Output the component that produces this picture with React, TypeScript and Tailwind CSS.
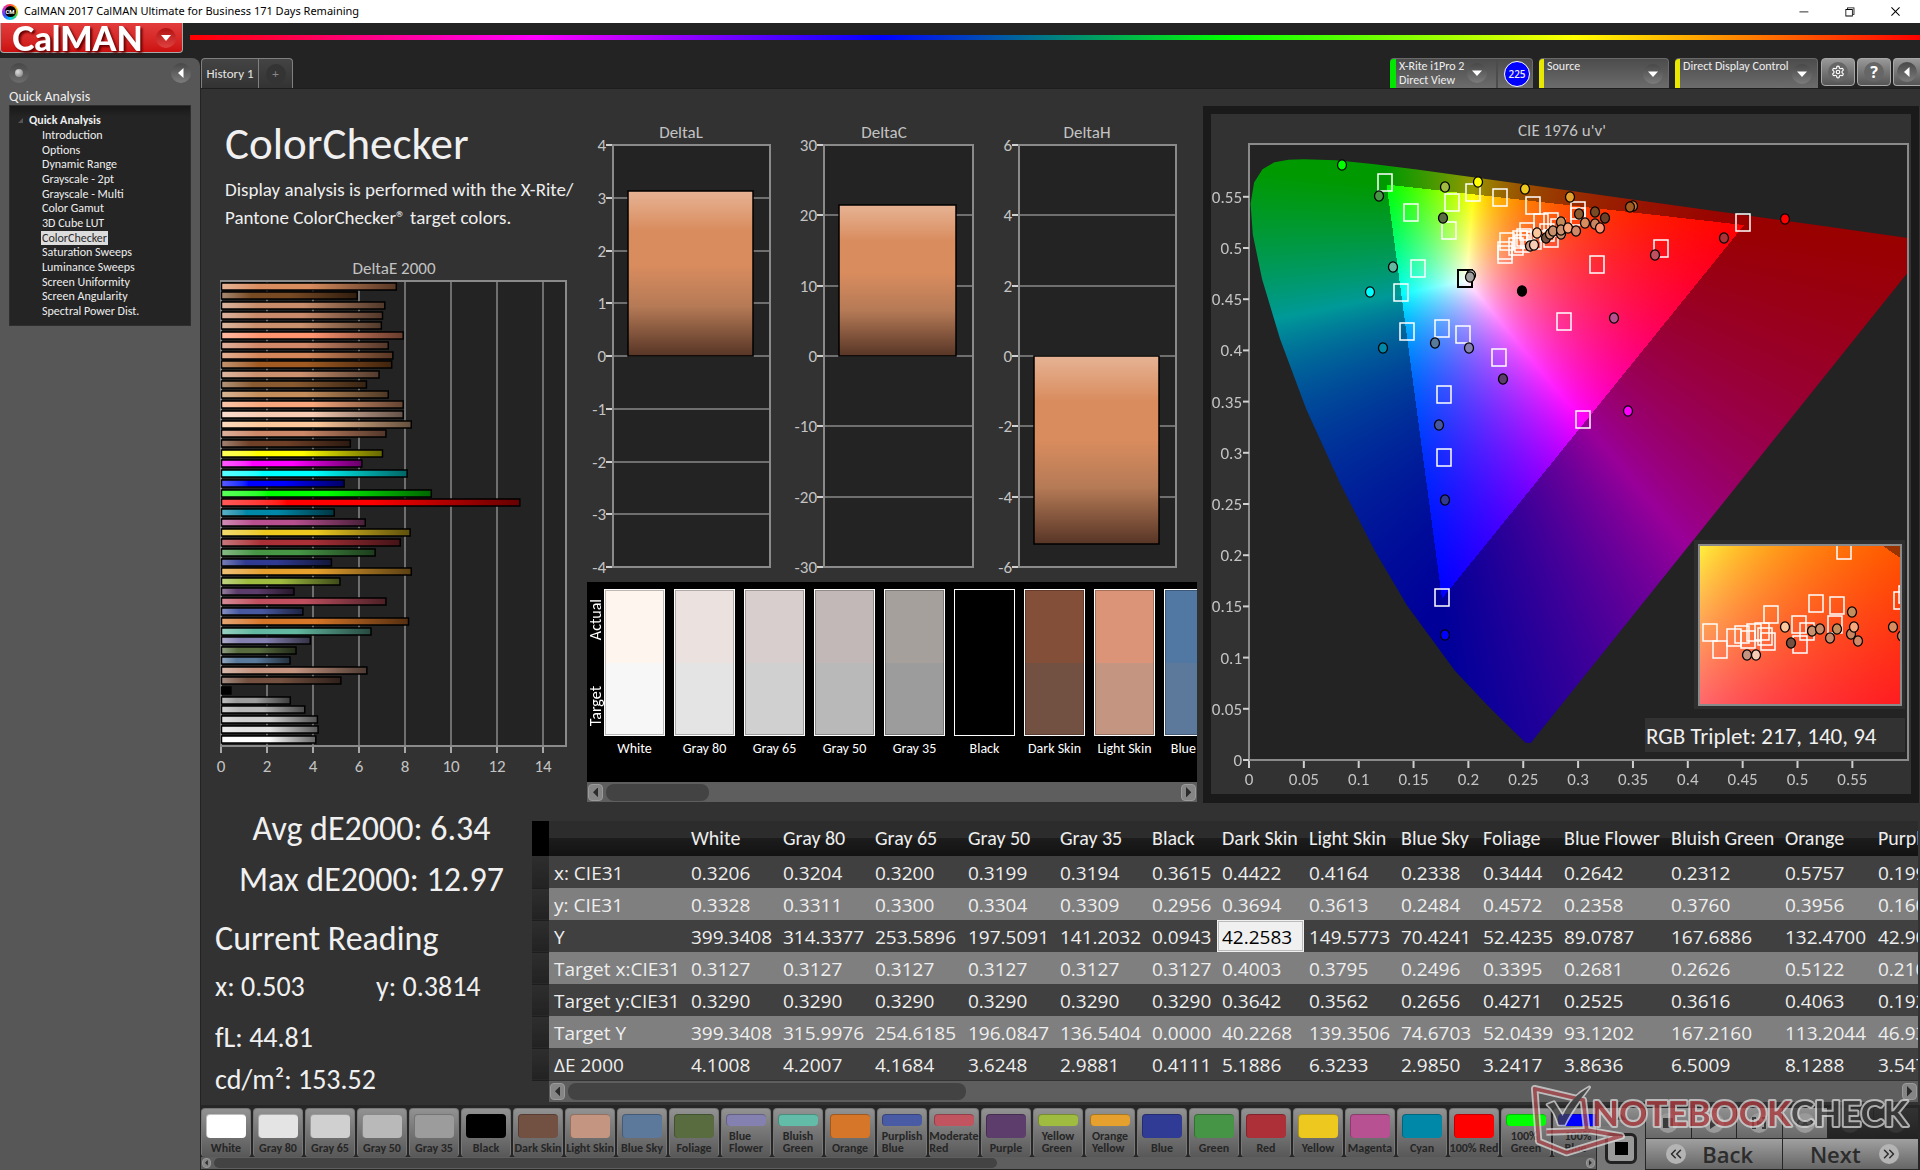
import React, { useEffect, useRef } from "react";
import clsx from "clsx";
import { VscChromeClose, VscChromeMinimize, VscChromeRestore } from "react-icons/vsc";
import { FiChevronsLeft, FiChevronsRight } from "react-icons/fi";
import { LuSettings } from "react-icons/lu";

const pages = [
  "Introduction",
  "Options",
  "Dynamic Range",
  "Grayscale - 2pt",
  "Grayscale - Multi",
  "Color Gamut",
  "3D Cube LUT",
  "ColorChecker",
  "Saturation Sweeps",
  "Luminance Sweeps",
  "Screen Uniformity",
  "Screen Angularity",
  "Spectral Power Dist.",
];

// [dE2000, color] from the top of the chart to the bottom
const deltaE: [number, string][] = [
  [7.6, "#d98c5e"],
  [5.9, "#784a24"],
  [7.1, "#c88c6a"],
  [7.0, "#c88a6a"],
  [6.95, "#c8906c"],
  [7.9, "#ff9470"],
  [7.25, "#d08868"],
  [7.45, "#d4865a"],
  [7.4, "#a05a22"],
  [6.85, "#cc9270"],
  [6.3, "#8a5a30"],
  [7.25, "#c48e5c"],
  [7.9, "#f8a87c"],
  [7.9, "#f8ccb4"],
  [8.25, "#fcc79a"],
  [7.15, "#cc8868"],
  [5.6, "#6e4028"],
  [7.0, "#ffff00"],
  [6.1, "#ff00ff"],
  [8.07, "#00ffff"],
  [5.33, "#0000ff"],
  [9.12, "#00ff00"],
  [12.97, "#ff0000"],
  [4.9, "#0088a8"],
  [6.25, "#b85090"],
  [8.2, "#edc920"],
  [7.77, "#aa3038"],
  [6.68, "#469646"],
  [4.78, "#303a90"],
  [8.25, "#e5a02e"],
  [5.15, "#9fbc40"],
  [3.15, "#5c3c6a"],
  [7.15, "#c05060"],
  [3.54, "#4858a0"],
  [8.13, "#d67628"],
  [6.5, "#62b8a0"],
  [3.86, "#8480b0"],
  [3.24, "#586c3f"],
  [2.98, "#5a7a9c"],
  [6.32, "#c49480"],
  [5.19, "#735040"],
  [0.41, "#000000"],
  [2.99, "#9c9c9c"],
  [3.62, "#b8b8b8"],
  [4.17, "#d0d0d0"],
  [4.2, "#e4e4e4"],
  [4.1, "#ffffff"],
];

const swatches = [
  { name: "White", actual: "#fff5ef", target: "#f7f7f7" },
  { name: "Gray 80", actual: "#ebe2e0", target: "#e4e4e4" },
  { name: "Gray 65", actual: "#d8cecd", target: "#d0d0d0" },
  { name: "Gray 50", actual: "#c2b8b7", target: "#b9b9b9" },
  { name: "Gray 35", actual: "#a5a09c", target: "#9c9c9c" },
  { name: "Black", actual: "#000000", target: "#000000" },
  { name: "Dark Skin", actual: "#834f39", target: "#735142" },
  { name: "Light Skin", actual: "#dc9479", target: "#c49681" },
  { name: "Blue Sky", actual: "#5177a3", target: "#5c799c" },
];

const headers = [
  "White",
  "Gray 80",
  "Gray 65",
  "Gray 50",
  "Gray 35",
  "Black",
  "Dark Skin",
  "Light Skin",
  "Blue Sky",
  "Foliage",
  "Blue Flower",
  "Bluish Green",
  "Orange",
  "Purplish Blue",
];

const rows: [string, string[]][] = [
  ["x: CIE31", ["0.3206", "0.3204", "0.3200", "0.3199", "0.3194", "0.3615", "0.4422", "0.4164", "0.2338", "0.3444", "0.2642", "0.2312", "0.5757", "0.199"]],
  ["y: CIE31", ["0.3328", "0.3311", "0.3300", "0.3304", "0.3309", "0.2956", "0.3694", "0.3613", "0.2484", "0.4572", "0.2358", "0.3760", "0.3956", "0.160"]],
  ["Y", ["399.3408", "314.3377", "253.5896", "197.5091", "141.2032", "0.0943", "42.2583", "149.5773", "70.4241", "52.4235", "89.0787", "167.6886", "132.4700", "42.90"]],
  ["Target x:CIE31", ["0.3127", "0.3127", "0.3127", "0.3127", "0.3127", "0.3127", "0.4003", "0.3795", "0.2496", "0.3395", "0.2681", "0.2626", "0.5122", "0.210"]],
  ["Target y:CIE31", ["0.3290", "0.3290", "0.3290", "0.3290", "0.3290", "0.3290", "0.3642", "0.3562", "0.2656", "0.4271", "0.2525", "0.3616", "0.4063", "0.192"]],
  ["Target Y", ["399.3408", "315.9976", "254.6185", "196.0847", "136.5404", "0.0000", "40.2268", "139.3506", "74.6703", "52.0439", "93.1202", "167.2160", "113.2044", "46.93"]],
  ["ΔE 2000", ["4.1008", "4.2007", "4.1684", "3.6248", "2.9881", "0.4111", "5.1886", "6.3233", "2.9850", "3.2417", "3.8636", "6.5009", "8.1288", "3.547"]],
];

const patterns: [string, string][] = [
  ["White", "#ffffff"],
  ["Gray 80", "#e4e4e4"],
  ["Gray 65", "#d0d0d0"],
  ["Gray 50", "#b9b9b9"],
  ["Gray 35", "#9c9c9c"],
  ["Black", "#000000"],
  ["Dark Skin", "#735142"],
  ["Light Skin", "#c49681"],
  ["Blue Sky", "#5c799c"],
  ["Foliage", "#586c3f"],
  ["Blue Flower", "#8480b0"],
  ["Bluish Green", "#62bca8"],
  ["Orange", "#d67628"],
  ["Purplish Blue", "#4a5ba5"],
  ["Moderate Red", "#c25460"],
  ["Purple", "#5c3d6b"],
  ["Yellow Green", "#9fbc40"],
  ["Orange Yellow", "#e5a02e"],
  ["Blue", "#303b95"],
  ["Green", "#469547"],
  ["Red", "#ad2f38"],
  ["Yellow", "#edc920"],
  ["Magenta", "#b85192"],
  ["Cyan", "#0088a8"],
  ["100% Red", "#ff0000"],
  ["100% Green", "#00ff00"],
  ["100% Blue", "#0000ff"],
];

// spectral locus in CIE 1931 xy, 380nm to 700nm
const locus: [number, number][] = [
  [0.1741, 0.005], [0.1714, 0.0051], [0.1644, 0.0109], [0.1566, 0.0177], [0.144, 0.0297],
  [0.1241, 0.0578], [0.1096, 0.0868], [0.0913, 0.1327], [0.0687, 0.2007], [0.0454, 0.295], [0.0235, 0.4127],
  [0.0082, 0.5384], [0.0039, 0.6548], [0.0139, 0.7502], [0.0389, 0.812], [0.0743, 0.8338],
  [0.1142, 0.8262], [0.1547, 0.8059], [0.2296, 0.7543], [0.3016, 0.6923], [0.3731, 0.6245],
  [0.4441, 0.5547], [0.5125, 0.4866], [0.5752, 0.4242], [0.627, 0.3725], [0.6658, 0.334],
  [0.6915, 0.3083], [0.719, 0.2809], [0.7347, 0.2653],
];

const targets: [number, number][] = [
  [136, 37], [162, 67], [203, 57], [224, 47], [251, 52], [284, 60], [200, 85], [169, 123],
  [152, 147], [158, 186], [193, 183], [214, 189], [250, 212], [195, 249], [195, 312], [193, 452],
  [334, 274], [315, 176], [348, 119], [412, 103], [494, 77], [329, 65], [329, 71], [256, 109],
  [256, 105], [258, 96], [267, 101], [271, 94], [275, 92], [278, 86], [273, 98], [279, 94],
  [285, 95], [292, 77], [302, 76], [309, 82], [298, 87], [302, 93],
];

const readings: [number, number, string][] = [
  [93, 20, "#00ff00"], [130, 51, "#469646"], [196, 42, "#9fbc40"], [229, 37, "#ffff00"],
  [276, 44, "#edc920"], [321, 52, "#e5a02e"], [194, 73, "#586c3f"], [384, 61, "#c87830"],
  [381, 62, "#a05a22"], [346, 67, "#784a24"], [356, 73, "#6e4028"], [330, 69, "#8a5a30"],
  [346, 79, "#c88560"], [336, 78, "#d98c5e"], [351, 83, "#ff9470"], [536, 74, "#ff0000"],
  [475, 93, "#aa3338"], [406, 110, "#c05060"], [144, 122, "#62b8a0"], [121, 147, "#00ffff"],
  [222, 130, "#d0d0d0"], [221, 132, "#a0a0a0"], [273, 146, "#000000"], [365, 173, "#b85090"],
  [134, 203, "#0088a8"], [186, 198, "#5a7a9c"], [220, 203, "#8480b0"], [254, 234, "#5c3c6a"],
  [379, 266, "#ff00ff"], [190, 280, "#4858a0"], [196, 355, "#303a90"], [196, 490, "#0000ff"],
  [281, 101, "#c49480"], [285, 100, "#f8ccb4"], [297, 93, "#735040"], [301, 89, "#c8906c"],
  [304, 86, "#c8906c"], [312, 77, "#c48e5c"], [312, 89, "#c88a6a"], [312, 85, "#cc9270"],
  [319, 83, "#f8a87c"], [327, 86, "#d08868"], [288, 88, "#fcc79a"],
];

const insetTargets: [number, number][] = [
  [146, 6], [118, 59], [139, 61], [73, 70], [101, 80], [137, 80], [109, 87], [12, 88], [22, 105],
  [36, 93], [44, 90], [50, 95], [56, 88], [64, 87], [67, 92], [70, 97], [102, 100], [203, 56], [208, 50],
];

const insetReadings: [number, number, string][] = [
  [87, 83, "#fcc79a"], [93, 99, "#735040"], [49, 111, "#c49480"], [58, 111, "#f8ccb4"],
  [114, 87, "#c8906c"], [122, 85, "#c88c6a"], [132, 94, "#c88a6a"], [139, 85, "#c48e5c"],
  [153, 90, "#c88560"], [156, 83, "#f8a87c"], [160, 97, "#d08868"], [154, 68, "#c48e5c"],
  [195, 83, "#d98c5e"], [204, 92, "#c88560"],
];

const toUv = (x: number, y: number): [number, number] => {
  const d = -2 * x + 12 * y + 3;
  return [(4 * x) / d, (9 * y) / d];
};

const xyToRgb = (x: number, y: number): [number, number, number] => {
  const X = x / y;
  const Z = (1 - x - y) / y;
  const r = 3.2406 * X - 1.5372 - 0.4986 * Z;
  const g = -0.9689 * X + 1.8758 + 0.0415 * Z;
  const b = 0.0557 * X - 0.204 + 1.057 * Z;
  const max = Math.max(r, g, b);
  const level = Math.min(r, g, b) < 0 ? 153 : 255;
  return [
    (Math.max(r, 0) / max) * level,
    (Math.max(g, 0) / max) * level,
    (Math.max(b, 0) / max) * level,
  ];
};

interface ChromaticityProps {
  width: number;
  height: number;
  mode: "uv" | "xy";
}

const Chromaticity: React.FC<ChromaticityProps> = ({ width, height, mode }) => {
  const ref = useRef<HTMLCanvasElement>(null);

  useEffect(() => {
    const ctx = ref.current?.getContext("2d");
    if (!ctx) return;
    const img = ctx.createImageData(width, height);
    for (let py = 0; py < height; py++) {
      for (let px = 0; px < width; px++) {
        let x = 0.385 + (px / width) * 0.129;
        let y = 0.441 - (py / height) * 0.118;
        if (mode === "uv") {
          const u = px / 1097;
          const v = Math.max((height - py) / 1024, 0.001);
          const d = 6 * u - 16 * v + 12;
          x = (9 * u) / d;
          y = (4 * v) / d;
        }
        const [r, g, b] = xyToRgb(x, y);
        img.data.set([r, g, b, 255], (py * width + px) * 4);
      }
    }
    ctx.putImageData(img, 0, 0);
    if (mode === "uv") {
      ctx.globalCompositeOperation = "destination-in";
      ctx.beginPath();
      locus.forEach(([x, y]) => {
        const [u, v] = toUv(x, y);
        ctx.lineTo(u * 1097, height - v * 1024);
      });
      ctx.fill();
      ctx.globalCompositeOperation = "source-over";
    }
  }, [width, height, mode]);

  return <canvas ref={ref} width={width} height={height} className="block" />;
};

const Marks: React.FC<{ squares: [number, number][]; dots: [number, number, string][] }> = ({
  squares,
  dots,
}) => (
  <>
    {squares.map(([x, y], i) => (
      <rect key={i} x={x - 7} y={y - 8} width={14} height={17} fill="none" stroke="#fff" strokeWidth={1.5} />
    ))}
    {dots.map(([x, y, fill], i) => (
      <ellipse key={i} cx={x} cy={y} rx={4.5} ry={5.2} fill={fill} stroke="#000" strokeWidth={1.3} />
    ))}
  </>
);

const CieChart = () => (
  <svg viewBox="0 0 700 680" className="block w-full font-[Carlito,Lato,sans-serif] text-[17px]">
    <rect x={38} y={30} width={659} height={616} fill="#232323" />
    <text x={351} y={22} textAnchor="middle" fill="#c3c3c3">
      CIE 1976 u'v'
    </text>
    <foreignObject x={38} y={30} width={659} height={616}>
      <Chromaticity width={659} height={616} mode="uv" />
    </foreignObject>
    <rect x={38} y={30} width={659} height={616} fill="none" stroke="#8a8a8a" strokeWidth={2} />
    {[...Array(12)].map((_, i) => (
      <g key={i} stroke="#d0d0d0" strokeWidth={2}>
        <path d={`M${38 + i * 54.85} 647v7`} />
        <path d={`M38 ${646 - i * 51.2}h-6`} />
        <text x={38 + i * 54.85} y={671} textAnchor="middle" fill="#c3c3c3" stroke="none">
          {+(i * 0.05).toFixed(2)}
        </text>
        <text x={31} y={652 - i * 51.2} textAnchor="end" fill="#c3c3c3" stroke="none">
          {+(i * 0.05).toFixed(2)}
        </text>
      </g>
    ))}
    <g transform="translate(38 31)">
      <Marks squares={targets} dots={[]} />
      <rect x={209} y={125} width={14} height={17} fill="none" stroke="#000" strokeWidth={2} />
      <Marks squares={[]} dots={readings} />
    </g>
    <rect x={483} y={426} width={211} height={169} fill="#2e2e2e" />
    <svg x={487} y={430} width={204} height={162}>
      <foreignObject width={204} height={162}>
        <Chromaticity width={204} height={162} mode="xy" />
      </foreignObject>
      <path d="M186 0h18v12z" fill="#993300" />
      <Marks squares={insetTargets} dots={insetReadings} />
      <rect width={204} height={162} fill="none" stroke="#8a8a8a" strokeWidth={4} />
    </svg>
    <rect x={434} y={604} width={260} height={34} fill="#323232" />
    <text x={435} y={630} fill="#f0f0f0" className="text-[23px]">
      RGB Triplet: 217, 140, 94
    </text>
  </svg>
);

const DeltaEChart = () => (
  <svg viewBox="0 0 379 530" className="block w-full font-[Carlito,Lato,sans-serif] text-[17px]">
    <text x={193} y={19} textAnchor="middle" fill="#c3c3c3">
      DeltaE 2000
    </text>
    <rect x={20} y={26} width={345} height={465} fill="#232323" stroke="#8a8a8a" strokeWidth={2} />
    {[0, 2, 4, 6, 8, 10, 12, 14].map((n) => (
      <g key={n}>
        <path d={`M${20 + n * 23} 26v465`} stroke="#8a8a8a" strokeWidth={1.5} />
        <path d={`M${20 + n * 23} 492v6`} stroke="#d0d0d0" strokeWidth={1.5} />
        <text x={20 + n * 23} y={517} textAnchor="middle" fill="#c3c3c3">
          {n}
        </text>
      </g>
    ))}
    {deltaE.map(([value, color], i) => (
      <g key={i}>
        <defs>
          <linearGradient id={`de${i}`}>
            <stop offset="0" stopColor={`color-mix(in srgb, ${color} 65%, ${color === "#000000" ? "#000" : "#fff"})`} />
            <stop offset="0.22" stopColor={color} />
            <stop offset="0.5" stopColor={color} />
            <stop offset="1" stopColor={`color-mix(in srgb, ${color} 40%, #000)`} />
          </linearGradient>
        </defs>
        <rect
          x={20.5}
          y={Math.round(27.5 + i * 9.86)}
          width={value * 23}
          height={7}
          fill={`url(#de${i})`}
          stroke="#000"
          strokeWidth={1.5}
        />
      </g>
    ))}
  </svg>
);

interface DeltaChartProps {
  title: string;
  max: number;
  step: number;
  value: number;
  left: number;
}

const DeltaChart: React.FC<DeltaChartProps> = ({ title, max, step, value, left }) => {
  const ticks = Array.from({ length: (2 * max) / step + 1 }, (_, i) => max - i * step);
  const right = 190;
  const y = (n: number) => Math.round(248 - (n / max) * 211);
  const barX = left + 15;

  return (
    <svg viewBox="0 0 203 474" className="block w-1/3 font-[Carlito,Lato,sans-serif] text-[17px]">
      <text x={101} y={30} textAnchor="middle" fill="#c3c3c3">
        {title}
      </text>
      <rect x={left} y={37} width={right - left} height={422} fill="#232323" stroke="#8a8a8a" strokeWidth={2} />
      {ticks.map((n) => (
        <g key={n}>
          <path d={`M${left} ${y(n)}H${right}`} stroke="#8a8a8a" strokeWidth={1.5} />
          <path d={`M${left - 1} ${y(n)}h-6`} stroke="#d0d0d0" strokeWidth={2} />
          <text x={left - 7} y={y(n) + 6} textAnchor="end" fill="#c3c3c3">
            {n}
          </text>
        </g>
      ))}
      <rect
        x={barX}
        y={Math.min(y(0), y(value))}
        width={right - 17 - barX}
        height={Math.abs(y(value) - y(0))}
        fill="url(#skin)"
        stroke="#000"
        strokeWidth={1.5}
      />
      <defs>
        <linearGradient id="skin" x2="0" y2="1">
          <stop offset="0" stopColor="#e6b394" />
          <stop offset="0.24" stopColor="#d98c5e" />
          <stop offset="0.45" stopColor="#d98c5e" />
          <stop offset="0.7" stopColor="#b57a56" />
          <stop offset="1" stopColor="#573526" />
        </linearGradient>
      </defs>
    </svg>
  );
};

interface ScrollBarProps {
  thumb: string;
  small?: boolean;
}

const ScrollBar: React.FC<ScrollBarProps> = ({ thumb, small }) => {
  const button = clsx(
    "flex items-center justify-center rounded bg-[#858585] border border-[#9a9a9a]",
    small ? "w-[9px] h-[10px]" : "w-[15px] h-[17px]"
  );
  return (
    <div className={clsx("flex items-center justify-between bg-[#5e5e5e] px-px", small ? "h-[12px]" : "h-[20px]")}>
      <button aria-label="Scroll left" className={button}>
        <svg viewBox="0 0 6 12" className="h-[70%]">
          <path d="M6 0v12L0 6z" fill="#2b2b2b" />
        </svg>
      </button>
      <div className="flex-1 px-[3px]">
        <div className={clsx("rounded-lg bg-[#434343]", small ? "h-[10px]" : "h-[17px]", thumb)} />
      </div>
      <button aria-label="Scroll right" className={button}>
        <svg viewBox="0 0 6 12" className="h-[70%]">
          <path d="M0 0v12l6-6z" fill="#2b2b2b" />
        </svg>
      </button>
    </div>
  );
};

const Arrow: React.FC<{ dir?: "down" | "left"; className?: string }> = ({ dir = "down", className }) => (
  <span
    className={clsx(
      "flex items-center justify-center h-5 w-5 rounded-full bg-gradient-to-b from-[#484848] to-[#7c7c7c]",
      className
    )}
  >
    <svg viewBox="0 0 10 10" className="h-[10px] w-[10px]">
      <path d={dir === "down" ? "M0 2.500h10L5 8z" : "M7.500 0v10L2 5z"} fill="#fff" />
    </svg>
  </span>
);

const TitleBar = () => (
  <div className="flex items-center h-[23px] bg-white px-[2px] text-black">
    <span className="flex items-center justify-center h-4 w-4 rounded-full bg-[conic-gradient(#f44,#fb0,#4c4,#0cf,#44f,#c3c,#f44)]">
      <span className="flex items-center justify-center h-[11px] w-[11px] rounded-full bg-black text-white text-[6px] font-bold font-[Roboto,sans-serif]">
        CM
      </span>
    </span>
    <span className="ml-[6px] text-[11px] font-[Noto_Sans,sans-serif] whitespace-nowrap">
      CalMAN 2017 CalMAN Ultimate for Business 171 Days Remaining
    </span>
    <div className="ml-auto flex h-full">
      <button aria-label="Minimize" className="flex items-center justify-center w-[46px]">
        <VscChromeMinimize size={13} />
      </button>
      <button aria-label="Restore" className="flex items-center justify-center w-[46px]">
        <VscChromeRestore size={13} />
      </button>
      <button aria-label="Close" className="flex items-center justify-center w-[46px]">
        <VscChromeClose size={13} />
      </button>
    </div>
  </div>
);

const Header = () => (
  <div className="flex items-start h-[35px] bg-[#232323]">
    <button className="flex items-center justify-between h-[30px] w-[183px] pl-[11px] pr-[6px] rounded-b border border-t-0 border-[#a8a8a8] bg-gradient-to-b from-[#e23c3c] to-[#cc0f0f] text-white">
      <span className="text-[34px] leading-none font-black font-[Lato,sans-serif] drop-shadow-[2px_2px_1px_#600]">
        CalMAN
      </span>
      <span className="flex items-center justify-center h-5 w-5 rounded-full bg-gradient-to-b from-[#b01010] to-[#e04040]">
        <svg viewBox="0 0 10 6" className="w-[10px]">
          <path d="M0 0h10L5 6z" fill="#fff" />
        </svg>
      </span>
    </button>
    <div className="flex-1 h-[5px] mt-3 ml-[7px] bg-[linear-gradient(to_right,#f00,#f0f_20%,#00f_40%,#0f0_60%,#ff0_80%,#f00)]" />
  </div>
);

const Sidebar = () => (
  <aside className="w-[200px] shrink-0 px-[9px] rounded-tr-lg bg-[#575757] text-[#eee]">
    <div className="flex items-center justify-between h-[29px]">
      <button
        aria-label="Record"
        className="flex items-center justify-center h-5 w-5 rounded-full bg-gradient-to-b from-[#484848] to-[#6c6c6c]"
      >
        <span className="h-2 w-2 rounded-full bg-[radial-gradient(circle_at_35%_35%,#ddd,#777)]" />
      </button>
      <button aria-label="Collapse panel">
        <Arrow dir="left" />
      </button>
    </div>
    <h2 className="h-[18px] text-sm leading-[20px]">Quick Analysis</h2>
    <nav className="h-[221px] pt-[7px] pl-2 border border-[#2e2e2e] bg-gradient-to-b from-[#191919] to-[#242424] to-5% text-xs leading-[14px]">
      <div className="flex items-center gap-[6px] h-[14px] font-bold">
        <svg viewBox="0 0 5 5" className="w-[5px]">
          <path d="M5 0v5H0z" fill="#555" />
        </svg>
        Quick Analysis
      </div>
      <ul className="flex flex-col justify-between h-[190px] mt-[1px] pl-[23px]">
        {pages.map((page) => (
          <li key={page} className="flex">
            <a
              href="#"
              className={clsx("px-px", page === "ColorChecker" && "bg-[#dcdcdc] text-[#2a2a2a]")}
            >
              {page}
            </a>
          </li>
        ))}
      </ul>
    </nav>
  </aside>
);

const toolTab =
  "flex h-[30px] rounded-t border-t border-r border-[#6a6a6a] bg-gradient-to-b from-[#4c4c4c] to-[#6c6c6c] text-xs leading-[14px] text-left text-[#eee]";
const toolButton =
  "flex items-center justify-center h-[28px] border border-[#a8a8a8] bg-gradient-to-b from-[#999] to-[#555] text-white";

const TabStrip = () => (
  <div className="flex h-[30px] bg-[#232323]">
    <div className="flex rounded-t border border-b-0 border-[#808080] bg-gradient-to-b from-[#444] to-[#333] text-[13px] text-[#e4e4e4]">
      <button className="w-[57px] border-r border-[#808080]">History 1</button>
      <button className="flex items-center justify-center w-[33px]">
        <span className="flex items-center justify-center h-5 w-5 rounded-full bg-[#343434] text-[#888]">+</span>
      </button>
    </div>
    <div className="ml-auto flex gap-[6px]">
      <button className={clsx(toolTab, "w-[143px]")}>
        <span className="w-[6px] h-full mr-[3px] rounded-tl bg-[#00e800]" />
        <span className="flex-1">
          X-Rite i1Pro 2
          <br />
          Direct View
        </span>
        <Arrow className="mt-1 mr-[9px]" />
        <span className="flex items-center h-full pl-[6px] pr-[2px] border-l-2 border-[#4c4c4c]">
          <span className="flex items-center justify-center h-[26px] w-[26px] rounded-full border border-white bg-[#0000ff] text-[10px] font-[Open_Sans,sans-serif] font-semibold">
            225
          </span>
        </span>
      </button>
      <button className={clsx(toolTab, "w-[130px]")}>
        <span className="w-[5px] h-full mr-[3px] rounded-tl bg-[#e8e800]" />
        <span className="flex-1">Source</span>
        <Arrow className="mt-[5px] mr-[5px]" />
      </button>
      <button className={clsx(toolTab, "w-[143px]")}>
        <span className="w-[5px] h-full mr-[3px] rounded-tl bg-[#e8e800]" />
        <span className="flex-1 whitespace-nowrap">Direct Display Control</span>
        <Arrow className="mt-[5px] mr-[5px]" />
      </button>
    </div>
    <div className="flex gap-[2px] ml-[3px]">
      <button aria-label="Settings" className={clsx(toolButton, "w-[34px] rounded")}>
        <span className="flex items-center justify-center h-5 w-5 rounded-full bg-[#666]">
          <LuSettings size={14} />
        </span>
      </button>
      <button aria-label="Help" className={clsx(toolButton, "w-[34px] rounded")}>
        <span className="flex items-center justify-center h-5 w-5 rounded-full bg-[#666] text-base leading-none font-bold font-[Open_Sans,sans-serif]">
          ?
        </span>
      </button>
      <button aria-label="Collapse toolbar" className={clsx(toolButton, "w-[27px] rounded-l border-r-0")}>
        <Arrow dir="left" />
      </button>
    </div>
  </div>
);

const SwatchStrip = () => (
  <div className="w-[610px] h-[220px]">
    <div className="flex h-[200px] pt-[7px] bg-black text-white overflow-hidden">
      <div className="flex flex-col justify-between w-[17px] shrink-0 h-[147px] py-[10px] text-base leading-[17px]">
        <span className="[writing-mode:vertical-rl] rotate-180">Actual</span>
        <span className="[writing-mode:vertical-rl] rotate-180">Target</span>
      </div>
      <div className="flex gap-[9px]">
        {swatches.map(({ name, actual, target }) => (
          <div key={name} className="w-[61px] shrink-0 text-center text-sm whitespace-nowrap">
            <div className="h-[147px] border border-white">
              <div className="h-1/2 border border-b-0 border-black/25" style={{ backgroundColor: actual }} />
              <div className="h-1/2 border border-t-0 border-black/25" style={{ backgroundColor: target }} />
            </div>
            <div className="mt-[3px]">{name}</div>
          </div>
        ))}
      </div>
    </div>
    <ScrollBar thumb="w-[103px]" />
  </div>
);

const Stats = () => (
  <div className="w-[331px] shrink-0 pl-[14px] text-[#f0f0f0] text-[28px] whitespace-nowrap">
    <div className="pr-1 text-center text-[34px] leading-[51px]">
      <div>Avg dE2000: 6.34</div>
      <div>Max dE2000: 12.97</div>
    </div>
    <h2 className="mt-2 text-[34px] leading-[52px]">Current Reading</h2>
    <div className="flex leading-[44px]">
      <span className="w-[161px]">x: 0.503</span>
      <span>y: 0.3814</span>
    </div>
    <div className="mt-[8px] leading-[42px]">fL: 44.81</div>
    <div className="leading-[42px]">cd/m²: 153.52</div>
  </div>
);

const ReadingsTable = () => (
  <div className="flex-1 min-w-0 pt-[18px] pr-[2px]">
    <div className="overflow-hidden">
      <table className="table-fixed w-[1442px] border-collapse text-left text-[#eee] whitespace-nowrap">
        <colgroup>
          <col className="w-[17px]" />
          <col className="w-[137px]" />
          <col className="w-[92px]" />
          <col className="w-[92px]" />
          <col className="w-[93px]" />
          <col className="w-[92px]" />
          <col className="w-[92px]" />
          <col className="w-[70px]" />
          <col className="w-[87px]" />
          <col className="w-[92px]" />
          <col className="w-[82px]" />
          <col className="w-[81px]" />
          <col className="w-[107px]" />
          <col className="w-[114px]" />
          <col className="w-[93px]" />
          <col className="w-[101px]" />
        </colgroup>
        <thead>
          <tr className="h-[35px] bg-[linear-gradient(#2c2c2c_50%,#1c1c1c_50%,#121212)] text-xl leading-none">
            <th className="bg-black" />
            <th />
            {headers.map((name) => (
              <th key={name} className="p-0 pl-[5px] pb-[2px] font-normal">
                {name}
              </th>
            ))}
          </tr>
        </thead>
        <tbody className="font-[Open_Sans,sans-serif] text-[19px] leading-none">
          {rows.map(([label, cells], r) => (
            <tr key={label} className={clsx("h-[32px]", r % 2 ? "bg-[#7f7f7f]" : "bg-[#404040]")}>
              <td className="border-b border-[#1e1e1e] bg-gradient-to-b from-[#2e2e2e] to-[#222]" />
              <th className="p-0 pl-[5px] pt-[2px] font-normal">{label}</th>
              {cells.map((cell, c) => (
                <td
                  key={c}
                  className={clsx(
                    "p-0 pl-[5px] pt-[2px]",
                    r === 2 && c === 6 && "bg-[#f0f0f0] text-black outline-1 -outline-offset-2 outline-[#bbb]"
                  )}
                >
                  {cell}
                </td>
              ))}
            </tr>
          ))}
        </tbody>
      </table>
    </div>
    <div className="ml-[17px] pt-px bg-[#5e5e5e]">
      <ScrollBar thumb="w-[398px]" />
    </div>
  </div>
);

const transport = [
  { name: "Stop", icon: <path d="M5 5h10v10H5z" /> },
  { name: "Play", icon: <path d="M6 4l9 6-9 6z" /> },
  { name: "Play step", icon: <path d="M3 4h4v2H5v8h2v2H3zM17 4h-4v2h2v8h-2v2h4zM8 7l5 3-5 3z" /> },
  {
    name: "Loop",
    icon: (
      <path
        d="M10 10C8 7 3 6 3 10s5 3 7 0 7-4 7 0-5 3-7 0z"
        fill="none"
        stroke="#3a3a3a"
        strokeWidth={2}
      />
    ),
  },
];

const Watermark = () => (
  <svg viewBox="0 0 400 100" className="absolute right-[2px] bottom-0 w-[400px] pointer-events-none opacity-75">
    <g transform="scale(.3333)" strokeLinejoin="round" fill="none">
      <path d="M88 104l20-8 26 42c18-38 44-68 80-86-30 40-54 72-74 112h-18c-6-22-16-46-34-60z" stroke="#ddd" strokeWidth={10} />
      <path d="M206 178L196 90 50 56l12 158 83 34 165-50-95-16-130 4" stroke="#ddd" strokeWidth={22} />
      <path d="M206 178L196 90 50 56l12 158 83 34 165-50-95-16-130 4" stroke="#b04a4e" strokeWidth={11} />
      <path d="M88 104l20-8 26 42c18-38 44-68 80-86-30 40-54 72-74 112h-18c-6-22-16-46-34-60z" fill="#444" />
    </g>
    <g
      className="font-[Lato,sans-serif] text-[35px] font-bold [paint-order:stroke]"
      stroke="#d8d8d8"
      strokeWidth={4}
      strokeLinejoin="round"
    >
      <text x={74} y={56} fill="#b03a3e">
        NOTEBOOK
      </text>
      <text x={273} y={56} fill="#3a3a3a">
        CHECK
      </text>
    </g>
  </svg>
);

const wizardButton =
  "flex items-center justify-center flex-1 bg-gradient-to-b from-[#a0a0a0] to-[#666] font-[Open_Sans,sans-serif] text-[22px] leading-none font-semibold text-[#2c2c2c]";

const PatternBar = () => (
  <footer className="relative flex h-[65px] pt-[3px] bg-[#262626]">
    <div className="flex-1 min-w-0 overflow-hidden">
      <div className="flex gap-[2px] h-[49px] overflow-hidden">
        {patterns.map(([name, color]) => {
          const wrapped = name.includes(" ") && !/^(Gray|Dark|Light|Blue Sky|100% Red)/.test(name);
          return (
            <button
              key={name}
              className="flex flex-col items-center justify-between w-[50px] shrink-0 pt-[5px] pb-[3px] rounded border-x border-t border-[#777] bg-gradient-to-b from-[#929292] to-[#585858] text-xs leading-[12px] font-bold text-[#262626]"
            >
              <span
                className={clsx("w-[40px] rounded-sm border-t border-l border-black/25", wrapped ? "h-[12px]" : "h-[24px]")}
                style={{ backgroundColor: color }}
              />
              <span className={clsx("text-left", !wrapped && "whitespace-nowrap")}>
                {wrapped ? name.split(" ").map((word) => <span key={word} className="block">{word}</span>) : name}
              </span>
            </button>
          );
        })}
      </div>
      <ScrollBar thumb="w-[783px]" small />
    </div>
    <div className="flex flex-col w-[48px] mx-px">
      <button aria-label="Expand patterns" className="flex items-center justify-center h-[18px] rounded-t bg-gradient-to-b from-[#909090] to-[#707070]">
        <svg viewBox="0 0 10 6" className="w-[10px]">
          <path d="M0 6h10L5 0z" fill="#333" />
        </svg>
      </button>
      <button aria-label="Pattern window" className="flex items-center justify-center flex-1 bg-[#777]">
        <span className="flex items-center justify-center h-[31px] w-[32px] rounded-md border-3 border-[#222] bg-[#999]">
          <span className="h-[13px] w-[13px] bg-black" />
        </span>
      </button>
    </div>
    <div className="w-[272px] mr-[2px]">
      <div className="flex gap-px h-[30px]">
        {transport.map(({ name, icon }) => (
          <button
            key={name}
            aria-label={name}
            className="flex items-center justify-center flex-1 bg-gradient-to-b from-[#909090] to-[#686868]"
          >
            <span className="h-5 w-5 rounded-full bg-[#999]">
              <svg viewBox="0 0 20 20" fill="#3a3a3a">
                {icon}
              </svg>
            </span>
          </button>
        ))}
        {["Refresh", "Record"].map((name) => (
          <button
            key={name}
            aria-label={name}
            disabled
            className="flex items-center justify-center flex-1 bg-gradient-to-b from-[#333] to-[#232323]"
          >
            <span className="h-5 w-5 rounded-full bg-[#353535]" />
          </button>
        ))}
      </div>
      <div className="flex gap-px h-[30px] mt-px">
        <button className={clsx(wizardButton, "gap-[16px] pr-2")}>
          <span className="flex items-center justify-center h-5 w-5 rounded-full bg-[#b4b4b4]">
            <FiChevronsLeft size={18} />
          </span>
          Back
        </button>
        <button className={clsx(wizardButton, "gap-[18px] pl-2")}>
          Next
          <span className="flex items-center justify-center h-5 w-5 rounded-full bg-[#b4b4b4]">
            <FiChevronsRight size={18} />
          </span>
        </button>
      </div>
    </div>
    <Watermark />
  </footer>
);

const App: React.FC = () => {
  return (
    <div className="flex flex-col min-h-screen overflow-hidden bg-[#323232] font-[Carlito,Lato,sans-serif]">
      <TitleBar />
      <Header />
      <div className="flex flex-1 bg-[#232323]">
        <Sidebar />
        <div className="flex flex-col flex-1 min-w-0 pl-px">
          <TabStrip />
          <main className="flex-1 border-t border-[#1e1e1e] bg-[#323232]">
            <div className="flex items-start h-[714px]">
              <section className="w-[379px] shrink-0 pt-[27px]">
                <h1 className="pl-6 text-[45px] leading-[56px] text-[#f0f0f0]">ColorChecker</h1>
                <p className="h-[83px] pt-1 pl-6 text-[19px] leading-[28px] text-[#eee]">
                  Display analysis is performed with the X-Rite/
                  <br />
                  Pantone ColorChecker® target colors.
                </p>
                <DeltaEChart />
              </section>
              <section className="w-[623px] shrink-0 pt-[19px]">
                <div className="flex w-[609px]">
                  <DeltaChart title="DeltaL" max={4} step={1} value={3.13} left={33} />
                  <DeltaChart title="DeltaC" max={30} step={10} value={21.5} left={41} />
                  <DeltaChart title="DeltaH" max={6} step={2} value={-5.35} left={33} />
                </div>
                <div className="pl-[7px]">
                  <SwatchStrip />
                </div>
              </section>
              <section className="flex-1 mt-[17px] mr-px border-8 border-b-9 border-[#1a1a1a]">
                <CieChart />
              </section>
            </div>
            <div className="flex h-[302px]">
              <Stats />
              <ReadingsTable />
            </div>
          </main>
          <PatternBar />
        </div>
      </div>
    </div>
  );
};

export default App;
